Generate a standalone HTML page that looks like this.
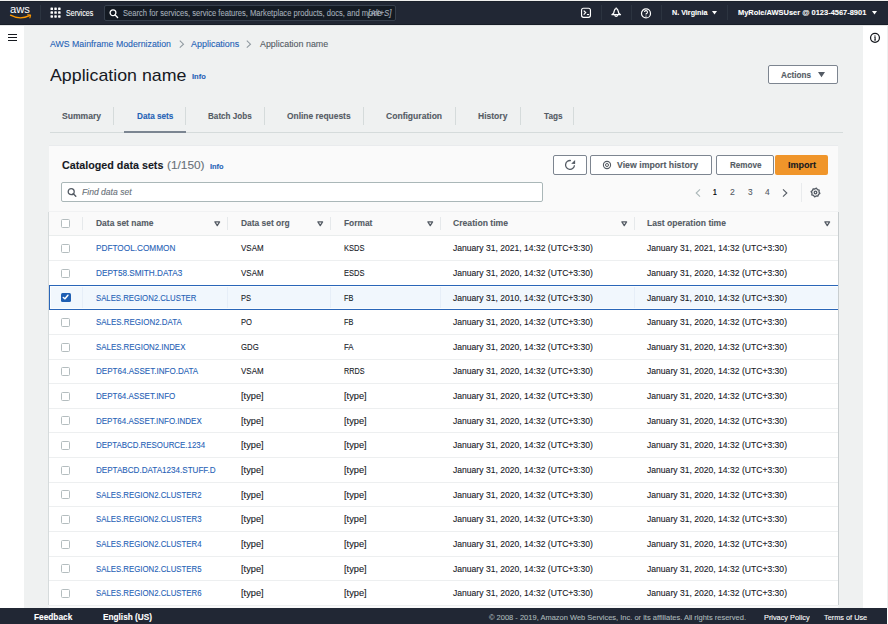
<!DOCTYPE html>
<html><head><meta charset="utf-8"><title>Application name</title>
<style>
html,body{margin:0;padding:0;width:888px;height:624px;overflow:hidden;background:#fff}
body{position:relative;font-family:'Liberation Sans', sans-serif}
svg{overflow:visible}
</style></head><body>
<div style="position:absolute;left:0px;top:0px;width:888px;height:624px;background:#ffffff"></div><div style="position:absolute;left:0px;top:0px;width:888px;height:1px;background:#f0f0ee"></div><div style="position:absolute;left:0px;top:1px;width:888px;height:24px;background:#212734"></div><div style="position:absolute;left:24px;top:25px;width:839px;height:583px;background:#eff1f1"></div><div style="position:absolute;left:0px;top:1px;width:888px;height:1px;background:#1b212b"></div><div style="position:absolute;left:0px;top:24px;width:888px;height:1px;background:#171d27"></div><div style="position:absolute;left:0px;top:25px;width:888px;height:1px;background:#e3e5e6"></div><div style="position:absolute;left:887px;top:25px;width:1px;height:583px;background:#eef0f0"></div><div style="position:absolute;left:0px;top:608px;width:887px;height:16px;background:#212734"></div><svg style="position:absolute;left:9px;top:5px" width="24" height="15" viewBox="0 0 24 15">
<text x="1" y="8.2" font-family="Liberation Sans" font-size="10" fill="#fff" textLength="20" lengthAdjust="spacingAndGlyphs">aws</text>
<path d="M1.5 10.2 Q11 15.2 20.5 10.6" stroke="#f90" stroke-width="1.3" fill="none" stroke-linecap="round"/>
<path d="M18.6 9.8 L21.6 10.1 L20.9 12.8" stroke="#f90" stroke-width="1.1" fill="none" stroke-linecap="round" stroke-linejoin="round"/>
</svg><div style="position:absolute;left:40px;top:5px;width:1px;height:15px;background:#2c3440"></div><svg style="position:absolute;left:50.4px;top:7.4px" width="12" height="12" viewBox="0 0 12 12"><rect x="0.50" y="0.50" width="2.5" height="2.5" rx="0.6" fill="#fff"/><rect x="0.50" y="4.35" width="2.5" height="2.5" rx="0.6" fill="#fff"/><rect x="0.50" y="8.20" width="2.5" height="2.5" rx="0.6" fill="#fff"/><rect x="4.30" y="0.50" width="2.5" height="2.5" rx="0.6" fill="#fff"/><rect x="4.30" y="4.35" width="2.5" height="2.5" rx="0.6" fill="#fff"/><rect x="4.30" y="8.20" width="2.5" height="2.5" rx="0.6" fill="#fff"/><rect x="8.10" y="0.50" width="2.5" height="2.5" rx="0.6" fill="#fff"/><rect x="8.10" y="4.35" width="2.5" height="2.5" rx="0.6" fill="#fff"/><rect x="8.10" y="8.20" width="2.5" height="2.5" rx="0.6" fill="#fff"/></svg><div style="position:absolute;left:103.5px;top:4.5px;width:292px;height:16.4px;background:#141a23;border:1px solid #363f4c;border-radius:2px;box-sizing:border-box"></div><svg style="position:absolute;left:109px;top:9px" width="10" height="9" viewBox="0 0 10 9">
<circle cx="4" cy="3.8" r="2.9" stroke="#fff" stroke-width="1.3" fill="none"/><path d="M6.1 5.9 L8.6 8.4" stroke="#fff" stroke-width="1.4" stroke-linecap="round"/></svg><svg style="position:absolute;left:578px;top:5px" width="16" height="16" viewBox="0 0 16 16">
<rect x="3.55" y="3.25" width="8.9" height="9.05" rx="2" stroke="#fff" stroke-width="1.15" fill="none"/>
<path d="M5.7 5.6 L7.7 7.6 L5.7 9.6" stroke="#fff" stroke-width="1.2" fill="none"/><path d="M8.9 9.55 H11.1" stroke="#fff" stroke-width="1.1"/></svg><div style="position:absolute;left:601px;top:5px;width:1px;height:15px;background:#2c3440"></div><svg style="position:absolute;left:608px;top:5px" width="16" height="16" viewBox="0 0 16 16">
<path d="M8.2 3.5 C7 3.5 6.5 4.6 6.2 6 L5.6 8.3 L3.9 9.7 H12.5 L10.8 8.3 L10.2 6 C9.9 4.6 9.4 3.5 8.2 3.5 Z" stroke="#fff" stroke-width="1.25" fill="none" stroke-linejoin="round"/>
<path d="M6.7 10.1 A1.55 1.55 0 0 0 9.7 10.1" stroke="#fff" stroke-width="1.25" fill="none"/><path d="M8.2 2.6 V3.5" stroke="#fff" stroke-width="1.1"/></svg><div style="position:absolute;left:631px;top:5px;width:1px;height:15px;background:#2c3440"></div><svg style="position:absolute;left:640px;top:7.5px" width="12" height="11" viewBox="0 0 12 11">
<circle cx="6" cy="5.4" r="4.5" stroke="#fff" stroke-width="1.2" fill="none"/>
<path d="M4.5 4.1 A1.5 1.5 0 1 1 6.4 5.6 Q6 5.8 6 6.6" stroke="#fff" stroke-width="1.1" fill="none"/><circle cx="6" cy="8.1" r="0.65" fill="#fff"/></svg><div style="position:absolute;left:661px;top:5px;width:1px;height:15px;background:#2c3440"></div><svg style="position:absolute;left:711.5px;top:10.8px" width="5" height="4" viewBox="0 0 5 4"><path d="M0 0 H5 L2.5 3.4 Z" fill="#fff"/></svg><div style="position:absolute;left:727px;top:5px;width:1px;height:15px;background:#2c3440"></div><svg style="position:absolute;left:871.8px;top:10.8px" width="5" height="4" viewBox="0 0 5 4"><path d="M0 0 H5 L2.5 3.4 Z" fill="#fff"/></svg><div style="position:absolute;left:8px;top:34px;width:9px;height:1.3px;background:#16191f"></div><div style="position:absolute;left:8px;top:37px;width:9px;height:1.3px;background:#16191f"></div><div style="position:absolute;left:8px;top:40px;width:9px;height:1.3px;background:#16191f"></div><svg style="position:absolute;left:869px;top:31.5px" width="12" height="12" viewBox="0 0 12 12">
<circle cx="6" cy="5.8" r="4.45" stroke="#16191f" stroke-width="1.25" fill="none"/>
<path d="M5.3 5.1 H6.1 V8.1" stroke="#16191f" stroke-width="1.1" fill="none"/><path d="M5.2 8.1 H6.9" stroke="#16191f" stroke-width="1"/><circle cx="5.95" cy="3.75" r="0.6" fill="#16191f"/></svg><svg style="position:absolute;left:178.6px;top:39.8px" width="6" height="9" viewBox="0 0 6 9"><path d="M0.8 0.7 L4.5 4.2 L0.8 7.7" stroke="#8f989f" stroke-width="1.05" fill="none"/></svg><svg style="position:absolute;left:246.4px;top:39.8px" width="6" height="9" viewBox="0 0 6 9"><path d="M0.8 0.7 L4.5 4.2 L0.8 7.7" stroke="#8f989f" stroke-width="1.05" fill="none"/></svg><div style="position:absolute;left:768px;top:65px;width:70px;height:19px;background:#fff;border:1px solid #7d8590;border-radius:2px;box-sizing:border-box"></div><svg style="position:absolute;left:817.5px;top:71.5px" width="7" height="6" viewBox="0 0 7 6"><path d="M0 0 H7 L3.5 5.2 Z" fill="#545b64"/></svg><div style="position:absolute;left:49.5px;top:132px;width:793.5px;height:1px;background:#d5dbdb"></div><div style="position:absolute;left:113px;top:106.5px;width:1px;height:18px;background:#d5dbdb"></div><div style="position:absolute;left:185px;top:106.5px;width:1px;height:18px;background:#d5dbdb"></div><div style="position:absolute;left:264px;top:106.5px;width:1px;height:18px;background:#d5dbdb"></div><div style="position:absolute;left:363px;top:106.5px;width:1px;height:18px;background:#d5dbdb"></div><div style="position:absolute;left:455px;top:106.5px;width:1px;height:18px;background:#d5dbdb"></div><div style="position:absolute;left:520px;top:106.5px;width:1px;height:18px;background:#d5dbdb"></div><div style="position:absolute;left:573px;top:106.5px;width:1px;height:18px;background:#d5dbdb"></div><div style="position:absolute;left:124px;top:131px;width:62px;height:2px;background:#7b8591"></div><div style="position:absolute;left:49px;top:146px;width:789px;height:462px;background:#fafafa;box-shadow:0 -1px 0 #e9ebed"></div><div style="position:absolute;left:553px;top:155px;width:34px;height:20px;background:#fff;border:1px solid #7d8590;border-radius:2px;box-sizing:border-box"></div><div style="position:absolute;left:590px;top:155px;width:122px;height:20px;background:#fff;border:1px solid #7d8590;border-radius:2px;box-sizing:border-box"></div><div style="position:absolute;left:716px;top:155px;width:58px;height:20px;background:#fff;border:1px solid #7d8590;border-radius:2px;box-sizing:border-box"></div><div style="position:absolute;left:775px;top:155px;width:53px;height:20px;background:#f0952a;border-radius:2px"></div><svg style="position:absolute;left:564px;top:159px" width="12" height="12" viewBox="0 0 12 12">
<path d="M6.9 1.6 A4.45 4.45 0 1 0 10.45 6.2" stroke="#545b64" stroke-width="1.3" fill="none"/>
<path d="M11.1 1.0 L11.1 5.0 L7.2 4.7 Z" fill="#545b64"/></svg><svg style="position:absolute;left:602px;top:160px" width="10" height="10" viewBox="0 0 10 10">
<circle cx="5" cy="5" r="3.6" stroke="#545b64" stroke-width="1.1" fill="none"/><circle cx="5" cy="5" r="1.5" stroke="#545b64" stroke-width="1" fill="none"/></svg><div style="position:absolute;left:61px;top:182px;width:482px;height:20px;background:#fff;border:1px solid #aab7b8;border-radius:2px;box-sizing:border-box"></div><svg style="position:absolute;left:67px;top:188px" width="10" height="9" viewBox="0 0 10 9">
<circle cx="4.2" cy="3.7" r="3" stroke="#545b64" stroke-width="1.3" fill="none"/><path d="M6.3 5.8 L8.8 8.3" stroke="#545b64" stroke-width="1.4" stroke-linecap="round"/></svg><svg style="position:absolute;left:694.5px;top:188.5px" width="6" height="8" viewBox="0 0 6 8"><path d="M5 0.4 L1.2 4 L5 7.6" stroke="#aab7b8" stroke-width="1.1" fill="none"/></svg><svg style="position:absolute;left:781.5px;top:188.5px" width="6" height="8" viewBox="0 0 6 8"><path d="M1 0.4 L4.8 4 L1 7.6" stroke="#545b64" stroke-width="1.1" fill="none"/></svg><div style="position:absolute;left:800.5px;top:182.5px;width:1px;height:19.5px;background:#e9ebed"></div><svg style="position:absolute;left:810.4px;top:186.5px" width="11" height="11" viewBox="0 0 11 11">
<path d="M6.37 1.14 L7.47 2.55 L9.20 3.03 L8.98 4.81 L9.86 6.37 L8.45 7.47 L7.97 9.20 L6.19 8.98 L4.63 9.86 L3.53 8.45 L1.80 7.97 L2.02 6.19 L1.14 4.63 L2.55 3.53 L3.03 1.80 L4.81 2.02 Z" stroke="#545b64" stroke-width="1.3" fill="none" stroke-linejoin="round"/>
<circle cx="5.5" cy="5.5" r="1.3" stroke="#545b64" stroke-width="1.3" fill="none"/></svg><div style="position:absolute;left:48px;top:212px;width:1px;height:393px;background:#d6dbdc"></div><div style="position:absolute;left:838px;top:212px;width:1px;height:393px;background:#c9ced0"></div><div style="position:absolute;left:49px;top:211px;width:789px;height:24px;background:#fafafa"></div><div style="position:absolute;left:49px;top:211px;width:789px;height:1px;background:#f1f2f3"></div><div style="position:absolute;left:61px;top:219px;width:9px;height:9px;background:#fff;border:1px solid #b4bdbf;border-radius:1.5px;box-sizing:border-box"></div><div style="position:absolute;left:82px;top:217px;width:1px;height:13px;background:#e6e9eb"></div><div style="position:absolute;left:227px;top:217px;width:1px;height:13px;background:#e6e9eb"></div><div style="position:absolute;left:330px;top:217px;width:1px;height:13px;background:#e6e9eb"></div><div style="position:absolute;left:440px;top:217px;width:1px;height:13px;background:#e6e9eb"></div><div style="position:absolute;left:634px;top:217px;width:1px;height:13px;background:#e6e9eb"></div><svg style="position:absolute;left:214.4px;top:220.5px" width="7" height="6" viewBox="0 0 7 6"><path d="M0.9 0.9 H5.6 L3.25 4.7 Z" stroke="#545b64" stroke-width="1.25" fill="none" stroke-linejoin="round"/></svg><svg style="position:absolute;left:317.3px;top:220.5px" width="7" height="6" viewBox="0 0 7 6"><path d="M0.9 0.9 H5.6 L3.25 4.7 Z" stroke="#545b64" stroke-width="1.25" fill="none" stroke-linejoin="round"/></svg><svg style="position:absolute;left:426.8px;top:220.5px" width="7" height="6" viewBox="0 0 7 6"><path d="M0.9 0.9 H5.6 L3.25 4.7 Z" stroke="#545b64" stroke-width="1.25" fill="none" stroke-linejoin="round"/></svg><svg style="position:absolute;left:621.0999999999999px;top:220.5px" width="7" height="6" viewBox="0 0 7 6"><path d="M0.9 0.9 H5.6 L3.25 4.7 Z" stroke="#545b64" stroke-width="1.25" fill="none" stroke-linejoin="round"/></svg><svg style="position:absolute;left:824.1999999999999px;top:220.5px" width="7" height="6" viewBox="0 0 7 6"><path d="M0.9 0.9 H5.6 L3.25 4.7 Z" stroke="#545b64" stroke-width="1.25" fill="none" stroke-linejoin="round"/></svg><div style="position:absolute;left:49px;top:235px;width:789px;height:1px;background:#eaeded"></div><div style="position:absolute;left:49px;top:236px;width:789px;height:24px;background:#fff"></div><div style="position:absolute;left:49px;top:260px;width:789px;height:1px;background:#edeff0"></div><div style="position:absolute;left:61px;top:244.0px;width:9px;height:9px;background:#fff;border:1px solid #b4bdbf;border-radius:1.5px;box-sizing:border-box"></div><div style="position:absolute;left:49px;top:261px;width:789px;height:24px;background:#fff"></div><div style="position:absolute;left:49px;top:285px;width:789px;height:1px;background:#edeff0"></div><div style="position:absolute;left:61px;top:268.64px;width:9px;height:9px;background:#fff;border:1px solid #b4bdbf;border-radius:1.5px;box-sizing:border-box"></div><div style="position:absolute;left:49px;top:286px;width:789px;height:23px;background:#fff"></div><div style="position:absolute;left:49px;top:309px;width:789px;height:1px;background:#edeff0"></div><div style="position:absolute;left:49px;top:285px;width:789px;height:25px;background:#f1f7fd;border:1px solid #2a66b8;border-right:0;box-sizing:border-box;box-shadow:inset 1px 1px 0 #fbfdff, inset 0 -1px 0 #fbfdff"></div><div style="position:absolute;left:82px;top:287px;width:1px;height:21px;background:#e6eef8"></div><div style="position:absolute;left:227px;top:287px;width:1px;height:21px;background:#e6eef8"></div><div style="position:absolute;left:330px;top:287px;width:1px;height:21px;background:#e6eef8"></div><div style="position:absolute;left:440px;top:287px;width:1px;height:21px;background:#e6eef8"></div><div style="position:absolute;left:634px;top:287px;width:1px;height:21px;background:#e6eef8"></div><div style="position:absolute;left:61px;top:293.28px;width:9.5px;height:9.2px;background:#1f5fb3;border-radius:1.5px"></div><svg style="position:absolute;left:61px;top:293.28px" width="9" height="9" viewBox="0 0 9 9"><path d="M2.3 4.5 L4 5.8 L6.9 2.2" stroke="#fff" stroke-width="1.5" fill="none" stroke-linecap="round" stroke-linejoin="round"/></svg><div style="position:absolute;left:49px;top:310px;width:789px;height:24px;background:#fff"></div><div style="position:absolute;left:49px;top:334px;width:789px;height:1px;background:#edeff0"></div><div style="position:absolute;left:61px;top:317.92px;width:9px;height:9px;background:#fff;border:1px solid #b4bdbf;border-radius:1.5px;box-sizing:border-box"></div><div style="position:absolute;left:49px;top:335px;width:789px;height:24px;background:#fff"></div><div style="position:absolute;left:49px;top:359px;width:789px;height:1px;background:#edeff0"></div><div style="position:absolute;left:61px;top:342.56px;width:9px;height:9px;background:#fff;border:1px solid #b4bdbf;border-radius:1.5px;box-sizing:border-box"></div><div style="position:absolute;left:49px;top:360px;width:789px;height:23px;background:#fff"></div><div style="position:absolute;left:49px;top:383px;width:789px;height:1px;background:#edeff0"></div><div style="position:absolute;left:61px;top:367.2px;width:9px;height:9px;background:#fff;border:1px solid #b4bdbf;border-radius:1.5px;box-sizing:border-box"></div><div style="position:absolute;left:49px;top:384px;width:789px;height:24px;background:#fff"></div><div style="position:absolute;left:49px;top:408px;width:789px;height:1px;background:#edeff0"></div><div style="position:absolute;left:61px;top:391.84000000000003px;width:9px;height:9px;background:#fff;border:1px solid #b4bdbf;border-radius:1.5px;box-sizing:border-box"></div><div style="position:absolute;left:49px;top:409px;width:789px;height:23px;background:#fff"></div><div style="position:absolute;left:49px;top:432px;width:789px;height:1px;background:#edeff0"></div><div style="position:absolute;left:61px;top:416.48px;width:9px;height:9px;background:#fff;border:1px solid #b4bdbf;border-radius:1.5px;box-sizing:border-box"></div><div style="position:absolute;left:49px;top:433px;width:789px;height:24px;background:#fff"></div><div style="position:absolute;left:49px;top:457px;width:789px;height:1px;background:#edeff0"></div><div style="position:absolute;left:61px;top:441.12px;width:9px;height:9px;background:#fff;border:1px solid #b4bdbf;border-radius:1.5px;box-sizing:border-box"></div><div style="position:absolute;left:49px;top:458px;width:789px;height:24px;background:#fff"></div><div style="position:absolute;left:49px;top:482px;width:789px;height:1px;background:#edeff0"></div><div style="position:absolute;left:61px;top:465.76px;width:9px;height:9px;background:#fff;border:1px solid #b4bdbf;border-radius:1.5px;box-sizing:border-box"></div><div style="position:absolute;left:49px;top:483px;width:789px;height:23px;background:#fff"></div><div style="position:absolute;left:49px;top:506px;width:789px;height:1px;background:#edeff0"></div><div style="position:absolute;left:61px;top:490.4px;width:9px;height:9px;background:#fff;border:1px solid #b4bdbf;border-radius:1.5px;box-sizing:border-box"></div><div style="position:absolute;left:49px;top:507px;width:789px;height:24px;background:#fff"></div><div style="position:absolute;left:49px;top:531px;width:789px;height:1px;background:#edeff0"></div><div style="position:absolute;left:61px;top:515.04px;width:9px;height:9px;background:#fff;border:1px solid #b4bdbf;border-radius:1.5px;box-sizing:border-box"></div><div style="position:absolute;left:49px;top:532px;width:789px;height:24px;background:#fff"></div><div style="position:absolute;left:49px;top:556px;width:789px;height:1px;background:#edeff0"></div><div style="position:absolute;left:61px;top:539.6800000000001px;width:9px;height:9px;background:#fff;border:1px solid #b4bdbf;border-radius:1.5px;box-sizing:border-box"></div><div style="position:absolute;left:49px;top:557px;width:789px;height:23px;background:#fff"></div><div style="position:absolute;left:49px;top:580px;width:789px;height:1px;background:#edeff0"></div><div style="position:absolute;left:61px;top:564.3199999999999px;width:9px;height:9px;background:#fff;border:1px solid #b4bdbf;border-radius:1.5px;box-sizing:border-box"></div><div style="position:absolute;left:49px;top:581px;width:789px;height:24px;background:#fff"></div><div style="position:absolute;left:49px;top:605px;width:789px;height:1px;background:#edeff0"></div><div style="position:absolute;left:61px;top:588.96px;width:9px;height:9px;background:#fff;border:1px solid #b4bdbf;border-radius:1.5px;box-sizing:border-box"></div>
<div style="position:absolute;left:65.80px;top:8.60px;font-size:8.5px;line-height:8.5px;font-weight:400;font-style:normal;color:#ffffff;white-space:pre;transform:scaleX(0.8345);transform-origin:0 0;-webkit-text-stroke:0.1px currentColor">Services</div><div style="position:absolute;left:122.80px;top:8.70px;font-size:8.5px;line-height:8.5px;font-weight:400;font-style:normal;color:#a3acb7;white-space:pre;transform:scaleX(0.8933);transform-origin:0 0;-webkit-text-stroke:0.1px currentColor">Search for services, service features, Marketplace products, docs, and m</div><div style="position:absolute;left:368.30px;top:8.70px;font-size:8.5px;line-height:8.5px;font-weight:400;font-style:normal;color:#a3acb7;white-space:pre;transform:scaleX(1.1385);transform-origin:0 0;-webkit-text-stroke:0.1px currentColor">ore</div><div style="position:absolute;left:368.00px;top:8.70px;font-size:8.5px;line-height:8.5px;font-weight:400;font-style:italic;color:#a3acb7;white-space:pre;transform:scaleX(0.9295);transform-origin:0 0;-webkit-text-stroke:0.1px currentColor">[Alt+S]</div><div style="position:absolute;left:671.80px;top:8.73px;font-size:8px;line-height:8px;font-weight:700;font-style:normal;color:#ffffff;white-space:pre;transform:scaleX(0.8980);transform-origin:0 0;-webkit-text-stroke:0.1px currentColor">N. Virginia</div><div style="position:absolute;left:738.40px;top:8.73px;font-size:8px;line-height:8px;font-weight:700;font-style:normal;color:#ffffff;white-space:pre;transform:scaleX(0.9320);transform-origin:0 0;-webkit-text-stroke:0.1px currentColor">MyRole/AWSUser @ 0123-4567-8901</div><div style="position:absolute;left:49.50px;top:40.00px;font-size:8.5px;line-height:8.5px;font-weight:400;font-style:normal;color:#1f62b6;white-space:pre;transform:scaleX(1.0306);transform-origin:0 0;-webkit-text-stroke:0.1px currentColor">AWS Mainframe Modernization</div><div style="position:absolute;left:191.00px;top:40.00px;font-size:8.5px;line-height:8.5px;font-weight:400;font-style:normal;color:#1f62b6;white-space:pre;transform:scaleX(1.0536);transform-origin:0 0;-webkit-text-stroke:0.1px currentColor">Applications</div><div style="position:absolute;left:259.60px;top:40.00px;font-size:8.5px;line-height:8.5px;font-weight:400;font-style:normal;color:#545b64;white-space:pre;transform:scaleX(1.0457);transform-origin:0 0;-webkit-text-stroke:0.1px currentColor">Application name</div><div style="position:absolute;left:49.50px;top:66.61px;font-size:17px;line-height:17px;font-weight:400;font-style:normal;color:#16191f;white-space:pre;transform:scaleX(1.0458);transform-origin:0 0;">Application name</div><div style="position:absolute;left:191.80px;top:72.97px;font-size:7px;line-height:7px;font-weight:700;font-style:normal;color:#1f62b6;white-space:pre;transform:scaleX(1.0758);transform-origin:0 0;-webkit-text-stroke:0.1px currentColor">Info</div><div style="position:absolute;left:780.80px;top:70.50px;font-size:8.5px;line-height:8.5px;font-weight:700;font-style:normal;color:#545b64;white-space:pre;transform:scaleX(0.9624);transform-origin:0 0;-webkit-text-stroke:0.1px currentColor">Actions</div><div style="position:absolute;left:61.60px;top:111.58px;font-size:9px;line-height:9px;font-weight:700;font-style:normal;color:#545b64;white-space:pre;transform:scaleX(0.9529);transform-origin:0 0;-webkit-text-stroke:0.1px currentColor">Summary</div><div style="position:absolute;left:136.50px;top:111.58px;font-size:9px;line-height:9px;font-weight:700;font-style:normal;color:#1f62b6;white-space:pre;transform:scaleX(0.9093);transform-origin:0 0;-webkit-text-stroke:0.1px currentColor">Data sets</div><div style="position:absolute;left:208.00px;top:111.58px;font-size:9px;line-height:9px;font-weight:700;font-style:normal;color:#545b64;white-space:pre;transform:scaleX(0.9028);transform-origin:0 0;-webkit-text-stroke:0.1px currentColor">Batch Jobs</div><div style="position:absolute;left:287.40px;top:111.58px;font-size:9px;line-height:9px;font-weight:700;font-style:normal;color:#545b64;white-space:pre;transform:scaleX(0.9349);transform-origin:0 0;-webkit-text-stroke:0.1px currentColor">Online requests</div><div style="position:absolute;left:386.40px;top:111.58px;font-size:9px;line-height:9px;font-weight:700;font-style:normal;color:#545b64;white-space:pre;transform:scaleX(0.9508);transform-origin:0 0;-webkit-text-stroke:0.1px currentColor">Configuration</div><div style="position:absolute;left:478.30px;top:111.58px;font-size:9px;line-height:9px;font-weight:700;font-style:normal;color:#545b64;white-space:pre;transform:scaleX(0.9479);transform-origin:0 0;-webkit-text-stroke:0.1px currentColor">History</div><div style="position:absolute;left:543.50px;top:111.58px;font-size:9px;line-height:9px;font-weight:700;font-style:normal;color:#545b64;white-space:pre;transform:scaleX(0.9094);transform-origin:0 0;-webkit-text-stroke:0.1px currentColor">Tags</div><div style="position:absolute;left:62.10px;top:159.89px;font-size:11px;line-height:11px;font-weight:700;font-style:normal;color:#16191f;white-space:pre;transform:scaleX(0.9757);transform-origin:0 0;-webkit-text-stroke:0.1px currentColor">Cataloged data sets</div><div style="position:absolute;left:166.50px;top:159.89px;font-size:11px;line-height:11px;font-weight:400;font-style:normal;color:#687078;white-space:pre;transform:scaleX(1.0758);transform-origin:0 0;-webkit-text-stroke:0.1px currentColor">(1/150)</div><div style="position:absolute;left:209.70px;top:163.25px;font-size:7.5px;line-height:7.5px;font-weight:700;font-style:normal;color:#1f62b6;white-space:pre;transform:scaleX(0.9891);transform-origin:0 0;-webkit-text-stroke:0.1px currentColor">Info</div><div style="position:absolute;left:617.30px;top:160.88px;font-size:9px;line-height:9px;font-weight:700;font-style:normal;color:#545b64;white-space:pre;transform:scaleX(0.9717);transform-origin:0 0;-webkit-text-stroke:0.1px currentColor">View import history</div><div style="position:absolute;left:729.50px;top:160.58px;font-size:9px;line-height:9px;font-weight:700;font-style:normal;color:#545b64;white-space:pre;transform:scaleX(0.8996);transform-origin:0 0;-webkit-text-stroke:0.1px currentColor">Remove</div><div style="position:absolute;left:787.60px;top:160.58px;font-size:9px;line-height:9px;font-weight:700;font-style:normal;color:#16191f;white-space:pre;transform:scaleX(1.0036);transform-origin:0 0;-webkit-text-stroke:0.1px currentColor">Import</div><div style="position:absolute;left:82.00px;top:187.90px;font-size:8.5px;line-height:8.5px;font-weight:400;font-style:italic;color:#687078;white-space:pre;transform:scaleX(1.0093);transform-origin:0 0;-webkit-text-stroke:0.1px currentColor">Find data set</div><div style="position:absolute;left:713.30px;top:188.30px;font-size:8.5px;line-height:8.5px;font-weight:700;font-style:normal;color:#16191f;white-space:pre;transform:scaleX(0.7815);transform-origin:0 0;-webkit-text-stroke:0.1px currentColor">1</div><div style="position:absolute;left:730.20px;top:188.30px;font-size:8.5px;line-height:8.5px;font-weight:400;font-style:normal;color:#545b64;white-space:pre;transform:scaleX(1.0139);transform-origin:0 0;-webkit-text-stroke:0.1px currentColor">2</div><div style="position:absolute;left:747.60px;top:188.30px;font-size:8.5px;line-height:8.5px;font-weight:400;font-style:normal;color:#545b64;white-space:pre;transform:scaleX(0.9716);transform-origin:0 0;-webkit-text-stroke:0.1px currentColor">3</div><div style="position:absolute;left:764.90px;top:188.30px;font-size:8.5px;line-height:8.5px;font-weight:400;font-style:normal;color:#545b64;white-space:pre;transform:scaleX(0.9927);transform-origin:0 0;-webkit-text-stroke:0.1px currentColor">4</div><div style="position:absolute;left:95.60px;top:219.28px;font-size:9px;line-height:9px;font-weight:700;font-style:normal;color:#545b64;white-space:pre;transform:scaleX(0.9405);transform-origin:0 0;-webkit-text-stroke:0.1px currentColor">Data set name</div><div style="position:absolute;left:240.50px;top:219.28px;font-size:9px;line-height:9px;font-weight:700;font-style:normal;color:#545b64;white-space:pre;transform:scaleX(0.9343);transform-origin:0 0;-webkit-text-stroke:0.1px currentColor">Data set org</div><div style="position:absolute;left:343.50px;top:219.28px;font-size:9px;line-height:9px;font-weight:700;font-style:normal;color:#545b64;white-space:pre;transform:scaleX(0.9307);transform-origin:0 0;-webkit-text-stroke:0.1px currentColor">Format</div><div style="position:absolute;left:453.00px;top:219.28px;font-size:9px;line-height:9px;font-weight:700;font-style:normal;color:#545b64;white-space:pre;transform:scaleX(0.9563);transform-origin:0 0;-webkit-text-stroke:0.1px currentColor">Creation time</div><div style="position:absolute;left:647.00px;top:219.28px;font-size:9px;line-height:9px;font-weight:700;font-style:normal;color:#545b64;white-space:pre;transform:scaleX(0.9516);transform-origin:0 0;-webkit-text-stroke:0.1px currentColor">Last operation time</div><div style="position:absolute;left:95.60px;top:244.28px;font-size:9px;line-height:9px;font-weight:400;font-style:normal;color:#1f62b6;white-space:pre;transform:scaleX(0.9143);transform-origin:0 0;-webkit-text-stroke:0.1px currentColor">PDFTOOL.COMMON</div><div style="position:absolute;left:240.50px;top:244.28px;font-size:9px;line-height:9px;font-weight:400;font-style:normal;color:#16191f;white-space:pre;transform:scaleX(0.8857);transform-origin:0 0;-webkit-text-stroke:0.1px currentColor">VSAM</div><div style="position:absolute;left:343.50px;top:244.28px;font-size:9px;line-height:9px;font-weight:400;font-style:normal;color:#16191f;white-space:pre;transform:scaleX(0.8362);transform-origin:0 0;-webkit-text-stroke:0.1px currentColor">KSDS</div><div style="position:absolute;left:453.20px;top:244.28px;font-size:9px;line-height:9px;font-weight:400;font-style:normal;color:#16191f;white-space:pre;transform:scaleX(0.9527);transform-origin:0 0;-webkit-text-stroke:0.1px currentColor">January 31, 2021, 14:32 (UTC+3:30)</div><div style="position:absolute;left:647.40px;top:244.28px;font-size:9px;line-height:9px;font-weight:400;font-style:normal;color:#16191f;white-space:pre;transform:scaleX(0.9534);transform-origin:0 0;-webkit-text-stroke:0.1px currentColor">January 31, 2021, 14:32 (UTC+3:30)</div><div style="position:absolute;left:95.60px;top:268.92px;font-size:9px;line-height:9px;font-weight:400;font-style:normal;color:#1f62b6;white-space:pre;transform:scaleX(0.9114);transform-origin:0 0;-webkit-text-stroke:0.1px currentColor">DEPT58.SMITH.DATA3</div><div style="position:absolute;left:240.50px;top:268.92px;font-size:9px;line-height:9px;font-weight:400;font-style:normal;color:#16191f;white-space:pre;transform:scaleX(0.8857);transform-origin:0 0;-webkit-text-stroke:0.1px currentColor">VSAM</div><div style="position:absolute;left:343.50px;top:268.92px;font-size:9px;line-height:9px;font-weight:400;font-style:normal;color:#16191f;white-space:pre;transform:scaleX(0.8362);transform-origin:0 0;-webkit-text-stroke:0.1px currentColor">ESDS</div><div style="position:absolute;left:453.20px;top:268.92px;font-size:9px;line-height:9px;font-weight:400;font-style:normal;color:#16191f;white-space:pre;transform:scaleX(0.9527);transform-origin:0 0;-webkit-text-stroke:0.1px currentColor">January 31, 2020, 14:32 (UTC+3:30)</div><div style="position:absolute;left:647.40px;top:268.92px;font-size:9px;line-height:9px;font-weight:400;font-style:normal;color:#16191f;white-space:pre;transform:scaleX(0.9534);transform-origin:0 0;-webkit-text-stroke:0.1px currentColor">January 31, 2020, 14:32 (UTC+3:30)</div><div style="position:absolute;left:95.60px;top:293.56px;font-size:9px;line-height:9px;font-weight:400;font-style:normal;color:#1f62b6;white-space:pre;transform:scaleX(0.8615);transform-origin:0 0;-webkit-text-stroke:0.1px currentColor">SALES.REGION2.CLUSTER</div><div style="position:absolute;left:240.50px;top:293.56px;font-size:9px;line-height:9px;font-weight:400;font-style:normal;color:#16191f;white-space:pre;transform:scaleX(0.8322);transform-origin:0 0;-webkit-text-stroke:0.1px currentColor">PS</div><div style="position:absolute;left:343.50px;top:293.56px;font-size:9px;line-height:9px;font-weight:400;font-style:normal;color:#16191f;white-space:pre;transform:scaleX(0.8163);transform-origin:0 0;-webkit-text-stroke:0.1px currentColor">FB</div><div style="position:absolute;left:453.20px;top:293.56px;font-size:9px;line-height:9px;font-weight:400;font-style:normal;color:#16191f;white-space:pre;transform:scaleX(0.9527);transform-origin:0 0;-webkit-text-stroke:0.1px currentColor">January 31, 2010, 14:32 (UTC+3:30)</div><div style="position:absolute;left:647.40px;top:293.56px;font-size:9px;line-height:9px;font-weight:400;font-style:normal;color:#16191f;white-space:pre;transform:scaleX(0.9534);transform-origin:0 0;-webkit-text-stroke:0.1px currentColor">January 31, 2010, 14:32 (UTC+3:30)</div><div style="position:absolute;left:95.60px;top:318.20px;font-size:9px;line-height:9px;font-weight:400;font-style:normal;color:#1f62b6;white-space:pre;transform:scaleX(0.8827);transform-origin:0 0;-webkit-text-stroke:0.1px currentColor">SALES.REGION2.DATA</div><div style="position:absolute;left:240.50px;top:318.20px;font-size:9px;line-height:9px;font-weight:400;font-style:normal;color:#16191f;white-space:pre;transform:scaleX(0.8451);transform-origin:0 0;-webkit-text-stroke:0.1px currentColor">PO</div><div style="position:absolute;left:343.50px;top:318.20px;font-size:9px;line-height:9px;font-weight:400;font-style:normal;color:#16191f;white-space:pre;transform:scaleX(0.8163);transform-origin:0 0;-webkit-text-stroke:0.1px currentColor">FB</div><div style="position:absolute;left:453.20px;top:318.20px;font-size:9px;line-height:9px;font-weight:400;font-style:normal;color:#16191f;white-space:pre;transform:scaleX(0.9527);transform-origin:0 0;-webkit-text-stroke:0.1px currentColor">January 31, 2020, 14:32 (UTC+3:30)</div><div style="position:absolute;left:647.40px;top:318.20px;font-size:9px;line-height:9px;font-weight:400;font-style:normal;color:#16191f;white-space:pre;transform:scaleX(0.9534);transform-origin:0 0;-webkit-text-stroke:0.1px currentColor">January 31, 2020, 14:32 (UTC+3:30)</div><div style="position:absolute;left:95.60px;top:342.84px;font-size:9px;line-height:9px;font-weight:400;font-style:normal;color:#1f62b6;white-space:pre;transform:scaleX(0.8761);transform-origin:0 0;-webkit-text-stroke:0.1px currentColor">SALES.REGION2.INDEX</div><div style="position:absolute;left:240.50px;top:342.84px;font-size:9px;line-height:9px;font-weight:400;font-style:normal;color:#16191f;white-space:pre;transform:scaleX(0.8628);transform-origin:0 0;-webkit-text-stroke:0.1px currentColor">GDG</div><div style="position:absolute;left:343.50px;top:342.84px;font-size:9px;line-height:9px;font-weight:400;font-style:normal;color:#16191f;white-space:pre;transform:scaleX(0.8715);transform-origin:0 0;-webkit-text-stroke:0.1px currentColor">FA</div><div style="position:absolute;left:453.20px;top:342.84px;font-size:9px;line-height:9px;font-weight:400;font-style:normal;color:#16191f;white-space:pre;transform:scaleX(0.9527);transform-origin:0 0;-webkit-text-stroke:0.1px currentColor">January 31, 2020, 14:32 (UTC+3:30)</div><div style="position:absolute;left:647.40px;top:342.84px;font-size:9px;line-height:9px;font-weight:400;font-style:normal;color:#16191f;white-space:pre;transform:scaleX(0.9534);transform-origin:0 0;-webkit-text-stroke:0.1px currentColor">January 31, 2020, 14:32 (UTC+3:30)</div><div style="position:absolute;left:95.60px;top:367.48px;font-size:9px;line-height:9px;font-weight:400;font-style:normal;color:#1f62b6;white-space:pre;transform:scaleX(0.8949);transform-origin:0 0;-webkit-text-stroke:0.1px currentColor">DEPT64.ASSET.INFO.DATA</div><div style="position:absolute;left:240.50px;top:367.48px;font-size:9px;line-height:9px;font-weight:400;font-style:normal;color:#16191f;white-space:pre;transform:scaleX(0.8857);transform-origin:0 0;-webkit-text-stroke:0.1px currentColor">VSAM</div><div style="position:absolute;left:343.50px;top:367.48px;font-size:9px;line-height:9px;font-weight:400;font-style:normal;color:#16191f;white-space:pre;transform:scaleX(0.8034);transform-origin:0 0;-webkit-text-stroke:0.1px currentColor">RRDS</div><div style="position:absolute;left:453.20px;top:367.48px;font-size:9px;line-height:9px;font-weight:400;font-style:normal;color:#16191f;white-space:pre;transform:scaleX(0.9527);transform-origin:0 0;-webkit-text-stroke:0.1px currentColor">January 31, 2020, 14:32 (UTC+3:30)</div><div style="position:absolute;left:647.40px;top:367.48px;font-size:9px;line-height:9px;font-weight:400;font-style:normal;color:#16191f;white-space:pre;transform:scaleX(0.9534);transform-origin:0 0;-webkit-text-stroke:0.1px currentColor">January 31, 2020, 14:32 (UTC+3:30)</div><div style="position:absolute;left:95.60px;top:392.12px;font-size:9px;line-height:9px;font-weight:400;font-style:normal;color:#1f62b6;white-space:pre;transform:scaleX(0.8907);transform-origin:0 0;-webkit-text-stroke:0.1px currentColor">DEPT64.ASSET.INFO</div><div style="position:absolute;left:240.50px;top:392.12px;font-size:9px;line-height:9px;font-weight:400;font-style:normal;color:#16191f;white-space:pre;transform:scaleX(1.0265);transform-origin:0 0;-webkit-text-stroke:0.1px currentColor">[type]</div><div style="position:absolute;left:343.50px;top:392.12px;font-size:9px;line-height:9px;font-weight:400;font-style:normal;color:#16191f;white-space:pre;transform:scaleX(1.0265);transform-origin:0 0;-webkit-text-stroke:0.1px currentColor">[type]</div><div style="position:absolute;left:453.20px;top:392.12px;font-size:9px;line-height:9px;font-weight:400;font-style:normal;color:#16191f;white-space:pre;transform:scaleX(0.9527);transform-origin:0 0;-webkit-text-stroke:0.1px currentColor">January 31, 2020, 14:32 (UTC+3:30)</div><div style="position:absolute;left:647.40px;top:392.12px;font-size:9px;line-height:9px;font-weight:400;font-style:normal;color:#16191f;white-space:pre;transform:scaleX(0.9534);transform-origin:0 0;-webkit-text-stroke:0.1px currentColor">January 31, 2020, 14:32 (UTC+3:30)</div><div style="position:absolute;left:95.60px;top:416.76px;font-size:9px;line-height:9px;font-weight:400;font-style:normal;color:#1f62b6;white-space:pre;transform:scaleX(0.8888);transform-origin:0 0;-webkit-text-stroke:0.1px currentColor">DEPT64.ASSET.INFO.INDEX</div><div style="position:absolute;left:240.50px;top:416.76px;font-size:9px;line-height:9px;font-weight:400;font-style:normal;color:#16191f;white-space:pre;transform:scaleX(1.0265);transform-origin:0 0;-webkit-text-stroke:0.1px currentColor">[type]</div><div style="position:absolute;left:343.50px;top:416.76px;font-size:9px;line-height:9px;font-weight:400;font-style:normal;color:#16191f;white-space:pre;transform:scaleX(1.0265);transform-origin:0 0;-webkit-text-stroke:0.1px currentColor">[type]</div><div style="position:absolute;left:453.20px;top:416.76px;font-size:9px;line-height:9px;font-weight:400;font-style:normal;color:#16191f;white-space:pre;transform:scaleX(0.9527);transform-origin:0 0;-webkit-text-stroke:0.1px currentColor">January 31, 2020, 14:32 (UTC+3:30)</div><div style="position:absolute;left:647.40px;top:416.76px;font-size:9px;line-height:9px;font-weight:400;font-style:normal;color:#16191f;white-space:pre;transform:scaleX(0.9534);transform-origin:0 0;-webkit-text-stroke:0.1px currentColor">January 31, 2020, 14:32 (UTC+3:30)</div><div style="position:absolute;left:95.60px;top:441.40px;font-size:9px;line-height:9px;font-weight:400;font-style:normal;color:#1f62b6;white-space:pre;transform:scaleX(0.8772);transform-origin:0 0;-webkit-text-stroke:0.1px currentColor">DEPTABCD.RESOURCE.1234</div><div style="position:absolute;left:240.50px;top:441.40px;font-size:9px;line-height:9px;font-weight:400;font-style:normal;color:#16191f;white-space:pre;transform:scaleX(1.0265);transform-origin:0 0;-webkit-text-stroke:0.1px currentColor">[type]</div><div style="position:absolute;left:343.50px;top:441.40px;font-size:9px;line-height:9px;font-weight:400;font-style:normal;color:#16191f;white-space:pre;transform:scaleX(1.0265);transform-origin:0 0;-webkit-text-stroke:0.1px currentColor">[type]</div><div style="position:absolute;left:453.20px;top:441.40px;font-size:9px;line-height:9px;font-weight:400;font-style:normal;color:#16191f;white-space:pre;transform:scaleX(0.9527);transform-origin:0 0;-webkit-text-stroke:0.1px currentColor">January 31, 2020, 14:32 (UTC+3:30)</div><div style="position:absolute;left:647.40px;top:441.40px;font-size:9px;line-height:9px;font-weight:400;font-style:normal;color:#16191f;white-space:pre;transform:scaleX(0.9534);transform-origin:0 0;-webkit-text-stroke:0.1px currentColor">January 31, 2020, 14:32 (UTC+3:30)</div><div style="position:absolute;left:95.60px;top:466.04px;font-size:9px;line-height:9px;font-weight:400;font-style:normal;color:#1f62b6;white-space:pre;transform:scaleX(0.8983);transform-origin:0 0;-webkit-text-stroke:0.1px currentColor">DEPTABCD.DATA1234.STUFF.D</div><div style="position:absolute;left:240.50px;top:466.04px;font-size:9px;line-height:9px;font-weight:400;font-style:normal;color:#16191f;white-space:pre;transform:scaleX(1.0265);transform-origin:0 0;-webkit-text-stroke:0.1px currentColor">[type]</div><div style="position:absolute;left:343.50px;top:466.04px;font-size:9px;line-height:9px;font-weight:400;font-style:normal;color:#16191f;white-space:pre;transform:scaleX(1.0265);transform-origin:0 0;-webkit-text-stroke:0.1px currentColor">[type]</div><div style="position:absolute;left:453.20px;top:466.04px;font-size:9px;line-height:9px;font-weight:400;font-style:normal;color:#16191f;white-space:pre;transform:scaleX(0.9527);transform-origin:0 0;-webkit-text-stroke:0.1px currentColor">January 31, 2020, 14:32 (UTC+3:30)</div><div style="position:absolute;left:647.40px;top:466.04px;font-size:9px;line-height:9px;font-weight:400;font-style:normal;color:#16191f;white-space:pre;transform:scaleX(0.9534);transform-origin:0 0;-webkit-text-stroke:0.1px currentColor">January 31, 2020, 14:32 (UTC+3:30)</div><div style="position:absolute;left:95.60px;top:490.68px;font-size:9px;line-height:9px;font-weight:400;font-style:normal;color:#1f62b6;white-space:pre;transform:scaleX(0.8680);transform-origin:0 0;-webkit-text-stroke:0.1px currentColor">SALES.REGION2.CLUSTER2</div><div style="position:absolute;left:240.50px;top:490.68px;font-size:9px;line-height:9px;font-weight:400;font-style:normal;color:#16191f;white-space:pre;transform:scaleX(1.0265);transform-origin:0 0;-webkit-text-stroke:0.1px currentColor">[type]</div><div style="position:absolute;left:343.50px;top:490.68px;font-size:9px;line-height:9px;font-weight:400;font-style:normal;color:#16191f;white-space:pre;transform:scaleX(1.0265);transform-origin:0 0;-webkit-text-stroke:0.1px currentColor">[type]</div><div style="position:absolute;left:453.20px;top:490.68px;font-size:9px;line-height:9px;font-weight:400;font-style:normal;color:#16191f;white-space:pre;transform:scaleX(0.9527);transform-origin:0 0;-webkit-text-stroke:0.1px currentColor">January 31, 2020, 14:32 (UTC+3:30)</div><div style="position:absolute;left:647.40px;top:490.68px;font-size:9px;line-height:9px;font-weight:400;font-style:normal;color:#16191f;white-space:pre;transform:scaleX(0.9534);transform-origin:0 0;-webkit-text-stroke:0.1px currentColor">January 31, 2020, 14:32 (UTC+3:30)</div><div style="position:absolute;left:95.60px;top:515.32px;font-size:9px;line-height:9px;font-weight:400;font-style:normal;color:#1f62b6;white-space:pre;transform:scaleX(0.8680);transform-origin:0 0;-webkit-text-stroke:0.1px currentColor">SALES.REGION2.CLUSTER3</div><div style="position:absolute;left:240.50px;top:515.32px;font-size:9px;line-height:9px;font-weight:400;font-style:normal;color:#16191f;white-space:pre;transform:scaleX(1.0265);transform-origin:0 0;-webkit-text-stroke:0.1px currentColor">[type]</div><div style="position:absolute;left:343.50px;top:515.32px;font-size:9px;line-height:9px;font-weight:400;font-style:normal;color:#16191f;white-space:pre;transform:scaleX(1.0265);transform-origin:0 0;-webkit-text-stroke:0.1px currentColor">[type]</div><div style="position:absolute;left:453.20px;top:515.32px;font-size:9px;line-height:9px;font-weight:400;font-style:normal;color:#16191f;white-space:pre;transform:scaleX(0.9527);transform-origin:0 0;-webkit-text-stroke:0.1px currentColor">January 31, 2020, 14:32 (UTC+3:30)</div><div style="position:absolute;left:647.40px;top:515.32px;font-size:9px;line-height:9px;font-weight:400;font-style:normal;color:#16191f;white-space:pre;transform:scaleX(0.9534);transform-origin:0 0;-webkit-text-stroke:0.1px currentColor">January 31, 2020, 14:32 (UTC+3:30)</div><div style="position:absolute;left:95.60px;top:539.96px;font-size:9px;line-height:9px;font-weight:400;font-style:normal;color:#1f62b6;white-space:pre;transform:scaleX(0.8680);transform-origin:0 0;-webkit-text-stroke:0.1px currentColor">SALES.REGION2.CLUSTER4</div><div style="position:absolute;left:240.50px;top:539.96px;font-size:9px;line-height:9px;font-weight:400;font-style:normal;color:#16191f;white-space:pre;transform:scaleX(1.0265);transform-origin:0 0;-webkit-text-stroke:0.1px currentColor">[type]</div><div style="position:absolute;left:343.50px;top:539.96px;font-size:9px;line-height:9px;font-weight:400;font-style:normal;color:#16191f;white-space:pre;transform:scaleX(1.0265);transform-origin:0 0;-webkit-text-stroke:0.1px currentColor">[type]</div><div style="position:absolute;left:453.20px;top:539.96px;font-size:9px;line-height:9px;font-weight:400;font-style:normal;color:#16191f;white-space:pre;transform:scaleX(0.9527);transform-origin:0 0;-webkit-text-stroke:0.1px currentColor">January 31, 2020, 14:32 (UTC+3:30)</div><div style="position:absolute;left:647.40px;top:539.96px;font-size:9px;line-height:9px;font-weight:400;font-style:normal;color:#16191f;white-space:pre;transform:scaleX(0.9534);transform-origin:0 0;-webkit-text-stroke:0.1px currentColor">January 31, 2020, 14:32 (UTC+3:30)</div><div style="position:absolute;left:95.60px;top:564.60px;font-size:9px;line-height:9px;font-weight:400;font-style:normal;color:#1f62b6;white-space:pre;transform:scaleX(0.8680);transform-origin:0 0;-webkit-text-stroke:0.1px currentColor">SALES.REGION2.CLUSTER5</div><div style="position:absolute;left:240.50px;top:564.60px;font-size:9px;line-height:9px;font-weight:400;font-style:normal;color:#16191f;white-space:pre;transform:scaleX(1.0265);transform-origin:0 0;-webkit-text-stroke:0.1px currentColor">[type]</div><div style="position:absolute;left:343.50px;top:564.60px;font-size:9px;line-height:9px;font-weight:400;font-style:normal;color:#16191f;white-space:pre;transform:scaleX(1.0265);transform-origin:0 0;-webkit-text-stroke:0.1px currentColor">[type]</div><div style="position:absolute;left:453.20px;top:564.60px;font-size:9px;line-height:9px;font-weight:400;font-style:normal;color:#16191f;white-space:pre;transform:scaleX(0.9527);transform-origin:0 0;-webkit-text-stroke:0.1px currentColor">January 31, 2020, 14:32 (UTC+3:30)</div><div style="position:absolute;left:647.40px;top:564.60px;font-size:9px;line-height:9px;font-weight:400;font-style:normal;color:#16191f;white-space:pre;transform:scaleX(0.9534);transform-origin:0 0;-webkit-text-stroke:0.1px currentColor">January 31, 2020, 14:32 (UTC+3:30)</div><div style="position:absolute;left:95.60px;top:589.24px;font-size:9px;line-height:9px;font-weight:400;font-style:normal;color:#1f62b6;white-space:pre;transform:scaleX(0.8680);transform-origin:0 0;-webkit-text-stroke:0.1px currentColor">SALES.REGION2.CLUSTER6</div><div style="position:absolute;left:240.50px;top:589.24px;font-size:9px;line-height:9px;font-weight:400;font-style:normal;color:#16191f;white-space:pre;transform:scaleX(1.0265);transform-origin:0 0;-webkit-text-stroke:0.1px currentColor">[type]</div><div style="position:absolute;left:343.50px;top:589.24px;font-size:9px;line-height:9px;font-weight:400;font-style:normal;color:#16191f;white-space:pre;transform:scaleX(1.0265);transform-origin:0 0;-webkit-text-stroke:0.1px currentColor">[type]</div><div style="position:absolute;left:453.20px;top:589.24px;font-size:9px;line-height:9px;font-weight:400;font-style:normal;color:#16191f;white-space:pre;transform:scaleX(0.9527);transform-origin:0 0;-webkit-text-stroke:0.1px currentColor">January 31, 2020, 14:32 (UTC+3:30)</div><div style="position:absolute;left:647.40px;top:589.24px;font-size:9px;line-height:9px;font-weight:400;font-style:normal;color:#16191f;white-space:pre;transform:scaleX(0.9534);transform-origin:0 0;-webkit-text-stroke:0.1px currentColor">January 31, 2020, 14:32 (UTC+3:30)</div><div style="position:absolute;left:33.80px;top:612.80px;font-size:8.5px;line-height:8.5px;font-weight:700;font-style:normal;color:#ffffff;white-space:pre;transform:scaleX(0.9766);transform-origin:0 0;-webkit-text-stroke:0.1px currentColor">Feedback</div><div style="position:absolute;left:103.00px;top:612.80px;font-size:8.5px;line-height:8.5px;font-weight:700;font-style:normal;color:#ffffff;white-space:pre;transform:scaleX(0.9697);transform-origin:0 0;-webkit-text-stroke:0.1px currentColor">English (US)</div><div style="position:absolute;left:489.00px;top:613.65px;font-size:7.5px;line-height:7.5px;font-weight:400;font-style:normal;color:#aab7b8;white-space:pre;transform:scaleX(0.9998);transform-origin:0 0;-webkit-text-stroke:0.1px currentColor">© 2008 - 2019, Amazon Web Services, Inc. or its affiliates. All rights reserved.</div><div style="position:absolute;left:764.00px;top:614.23px;font-size:8px;line-height:8px;font-weight:400;font-style:normal;color:#ffffff;white-space:pre;transform:scaleX(0.9157);transform-origin:0 0;-webkit-text-stroke:0.1px currentColor">Privacy Policy</div><div style="position:absolute;left:824.30px;top:614.23px;font-size:8px;line-height:8px;font-weight:400;font-style:normal;color:#ffffff;white-space:pre;transform:scaleX(0.9167);transform-origin:0 0;-webkit-text-stroke:0.1px currentColor">Terms of Use</div>
</body></html>
